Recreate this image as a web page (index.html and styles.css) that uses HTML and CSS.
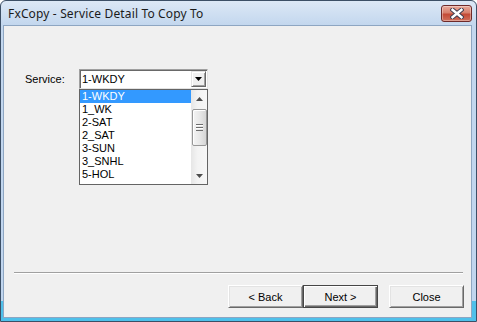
FILE: index.html
```html
<!DOCTYPE html>
<html lang="en">
    <head>
        <meta charset="UTF-8">
        <title>FxCopy - Service Detail To Copy To</title>
        <link rel="stylesheet" href="styles.css">
    </head>
    <body>
        <div class="window">
            <div class="titlebar">
                <span class="title">FxCopy - Service Detail To Copy To</span>
                <button class="close-x" title="Close">
                    <svg width="14" height="11" viewBox="0 0 14 11">
                        <path d="M2.5 1.8 L11.5 9.2 M11.5 1.8 L2.5 9.2" stroke="#3b3b4f" stroke-width="4.4" stroke-linecap="square"/>
                        <path d="M2.5 1.8 L11.5 9.2 M11.5 1.8 L2.5 9.2" stroke="#fff" stroke-width="2.4" stroke-linecap="square"/>
                    </svg>
                </button>
            </div>
            <div class="client">
                <div class="form">
                    <label class="field-label">Service:</label>
                    <div class="combo">
                        <span class="combo-value">1-WKDY</span>
                        <span class="combo-btn">
                            <svg width="7" height="4" viewBox="0 0 7 4"><path d="M0 0 H7 L3.5 4 Z" fill="#000"/></svg>
                        </span>
                        <div class="dropdown">
                            <ul class="options">
                                <li class="selected">1-WKDY</li>
                                <li>1_WK</li>
                                <li>2-SAT</li>
                                <li>2_SAT</li>
                                <li>3-SUN</li>
                                <li>3_SNHL</li>
                                <li>5-HOL</li>
                            </ul>
                            <div class="scrollbar">
                                <div class="sb-arrow">
                                    <svg width="7" height="4" viewBox="0 0 7 4"><path d="M3.5 0 L7 4 H0 Z" fill="#4d4d4d"/></svg>
                                </div>
                                <div class="sb-thumb"><span class="grip"></span></div>
                                <div class="sb-space"></div>
                                <div class="sb-arrow">
                                    <svg width="7" height="4" viewBox="0 0 7 4"><path d="M0 0 H7 L3.5 4 Z" fill="#4d4d4d"/></svg>
                                </div>
                            </div>
                        </div>
                    </div>
                </div>
                <div class="footer">
                    <div class="separator"></div>
                    <div class="buttons">
                        <button class="btn">&lt; Back</button>
                        <button class="btn default">Next &gt;</button>
                        <button class="btn close-btn">Close</button>
                    </div>
                </div>
            </div>
        </div>
    </body>
</html>
```

FILE: styles.css
```css
body {
    margin: 0;
    background: #ffffff;
    font-family: "Liberation Sans", Arial, sans-serif;
    font-size: 11px;
    color: #000;
}

.window {
    width: 477px;
    height: 322px;
    box-sizing: border-box;
    border: 1px solid #3c4f66;
    border-radius: 6px 6px 0 0;
    background: linear-gradient(#dce8f6, #c3d7ee 24px, #c0d5ee 300px, #4fc0ea 300px);
    padding: 0 4px 3px 2px;
    display: flex;
    flex-direction: column;
}

.titlebar {
    height: 24px;
    display: flex;
    justify-content: space-between;
    align-items: flex-start;
}

.title {
    margin: 4px 0 0 5px;
    font-family: "Noto Sans", sans-serif;
    font-size: 12px;
    line-height: 17px;
    letter-spacing: 0.15px;
    color: #1b1b1b;
}

.close-x {
    margin-top: 4px;
    width: 31px;
    height: 17px;
    padding: 0;
    border: 1px solid #6e2a2a;
    border-radius: 3px;
    background: linear-gradient(#e9a99a, #d7806d 45%, #c44a36 55%, #d0705c);
    box-shadow: inset 0 0 0 1px rgba(255, 255, 255, 0.35);
    display: flex;
    align-items: center;
    justify-content: center;
}

.client {
    flex: 1;
    background: #f0f0f0;
    border: 1px solid #8ea6c2;
    display: flex;
    flex-direction: column;
}

.form {
    padding: 43px 0 0 21px;
    display: flex;
    align-items: center;
}

.field-label {
    width: 54px;
}

.combo {
    position: relative;
    width: 129px;
    height: 20px;
    box-sizing: border-box;
    background: #fff;
    border: 1px solid;
    border-color: #a0a0a0 #e3e3e3 #e3e3e3 #a0a0a0;
    box-shadow: inset 1px 1px #696969, inset -1px -1px #ffffff;
    display: flex;
    align-items: center;
}

.combo-value {
    flex: 1;
    padding-left: 2px;
}

.combo-btn {
    width: 15px;
    height: 16px;
    margin-right: 1px;
    box-sizing: border-box;
    background: #f0f0f0;
    border: 1px solid;
    border-color: #e3e3e3 #696969 #696969 #e3e3e3;
    box-shadow: inset 1px 1px #fff, inset -1px -1px #a0a0a0;
    display: flex;
    align-items: center;
    justify-content: center;
}

.dropdown {
    position: absolute;
    top: 19px;
    left: -1px;
    width: 129px;
    height: 96px;
    box-sizing: border-box;
    background: #fff;
    border: 1px solid #646464;
    display: flex;
}

.options {
    flex: 1;
    margin: 0;
    padding: 0;
    list-style-type: none;
}

.options li {
    height: 13px;
    line-height: 13px;
    padding-left: 2px;
}

.options li.selected {
    background-color: #3399ff;
    color: #fff;
}

.scrollbar {
    width: 16px;
    background: linear-gradient(to right, #e6e6e6, #f3f3f3 40%, #f7f7f7);
    display: flex;
    flex-direction: column;
}

.sb-arrow {
    height: 17px;
    display: flex;
    align-items: center;
    justify-content: center;
}

.sb-thumb {
    height: 37px;
    margin: 2px 0 0 1px;
    box-sizing: border-box;
    border: 1px solid #979797;
    border-radius: 2px;
    background: linear-gradient(to right, #f4f4f4, #e8e8e8 50%, #d6d6d6);
    box-shadow: inset 1px 1px #fff;
    display: flex;
    align-items: center;
    justify-content: center;
}

.grip {
    width: 7px;
    height: 7px;
    background: repeating-linear-gradient(#6d6d6d 0 1px, #ffffff 1px 2px, transparent 2px 3px);
}

.sb-space {
    flex: 1;
}

.footer {
    margin-top: auto;
    padding-bottom: 9px;
}

.separator {
    margin: 0 8px 11px 10px;
    border-top: 1px solid #a0a0a0;
    border-bottom: 1px solid #ffffff;
}

.buttons {
    display: flex;
    justify-content: flex-end;
    padding-right: 7px;
}

.btn {
    width: 75px;
    height: 23px;
    padding: 0;
    font-family: "Liberation Sans", Arial, sans-serif;
    font-size: 11px;
    color: #000;
    background: #f0f0f0;
    border: 1px solid;
    border-color: #ffffff #696969 #696969 #ffffff;
    box-shadow: inset 1px 1px #e3e3e3, inset -1px -1px #a0a0a0;
}

.btn.default {
    border-color: #464646;
    box-shadow: inset 1px 1px #fff, inset -1px -1px #696969, inset -2px -2px #a0a0a0;
}

.btn.close-btn {
    margin-left: 11px;
}
```
